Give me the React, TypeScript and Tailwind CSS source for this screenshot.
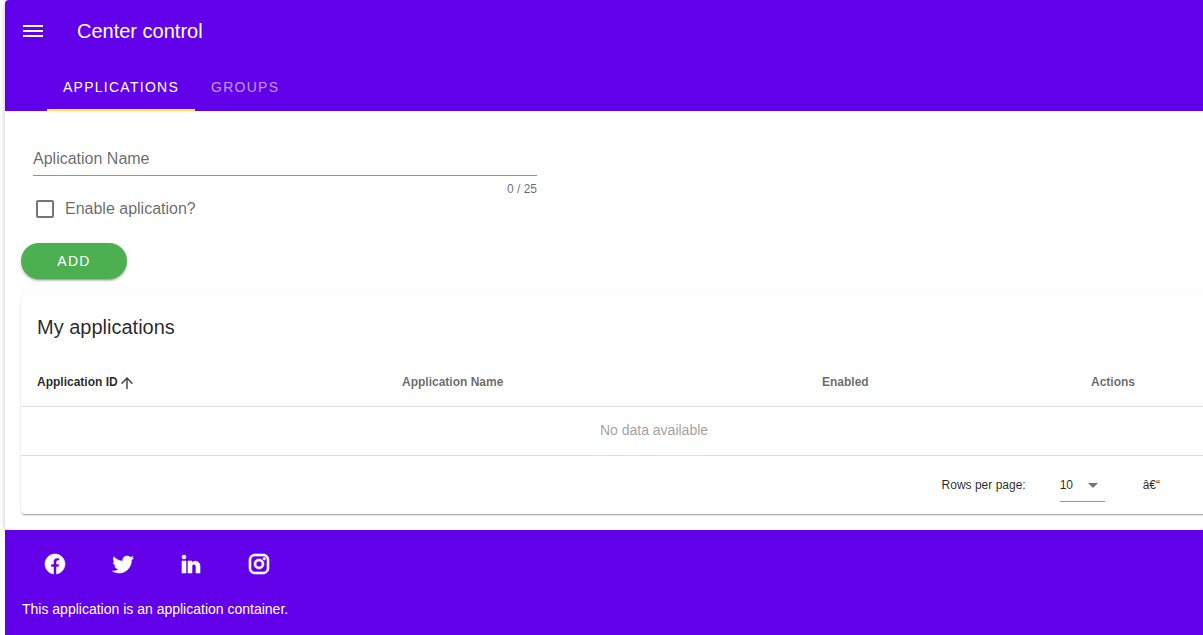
import { useState } from "react";

const icons = {
  menu: "M2,6H22V8H2V6M2,11H22V13H2V11M2,16H22V18H2V16Z",
  arrowUp: "M13,20H11V8L5.5,13.5L4.08,12.08L12,4.16L19.92,12.08L18.5,13.5L13,8V20Z",
  menuDown: "M7,10L12,15L17,10H7Z",
  facebook:
    "M12 2.04C6.5 2.04 2 6.53 2 12.06C2 17.06 5.66 21.21 10.44 21.96V14.96H7.9V12.06H10.44V9.85C10.44 7.34 11.93 5.96 14.22 5.96C15.31 5.96 16.45 6.15 16.45 6.15V8.62H15.19C13.95 8.62 13.56 9.39 13.56 10.18V12.06H16.34L15.89 14.96H13.56V21.96A10 10 0 0 0 22 12.06C22 6.53 17.5 2.04 12 2.04Z",
  twitter:
    "M22.46,6C21.69,6.35 20.86,6.58 20,6.69C20.88,6.16 21.56,5.32 21.88,4.31C21.05,4.81 20.13,5.16 19.16,5.36C18.37,4.5 17.26,4 16,4C13.65,4 11.73,5.92 11.73,8.29C11.73,8.63 11.77,8.96 11.84,9.27C8.28,9.09 5.11,7.38 3,4.79C2.63,5.42 2.42,6.16 2.42,6.94C2.42,8.43 3.17,9.75 4.33,10.5C3.62,10.5 2.96,10.3 2.38,10V10.03C2.38,12.11 3.86,13.85 5.82,14.24C5.46,14.34 5.08,14.39 4.69,14.39C4.42,14.39 4.15,14.36 3.89,14.31C4.43,16 6,17.26 7.89,17.29C6.43,18.45 4.58,19.13 2.56,19.13C2.22,19.13 1.88,19.11 1.54,19.07C3.44,20.29 5.7,21 8.12,21C16,21 20.33,14.46 20.33,8.79C20.33,8.6 20.33,8.42 20.32,8.23C21.16,7.63 21.88,6.87 22.46,6Z",
  linkedin:
    "M21,21H17V14.25C17,13.19 15.81,12.31 14.75,12.31C13.69,12.31 13,13.19 13,14.25V21H9V9H13V11C13.66,9.93 15.36,9.24 16.5,9.24C19,9.24 21,11.28 21,13.75V21M7,21H3V9H7V21M5,3A2,2 0 0,1 7,5A2,2 0 0,1 5,7A2,2 0 0,1 3,5A2,2 0 0,1 5,3Z",
  instagram:
    "M7.8,2H16.2C19.4,2 22,4.6 22,7.8V16.2A5.8,5.8 0 0,1 16.2,22H7.8C4.6,22 2,19.4 2,16.2V7.8A5.8,5.8 0 0,1 7.8,2M7.6,4A3.6,3.6 0 0,0 4,7.6V16.4C4,18.39 5.61,20 7.6,20H16.4A3.6,3.6 0 0,0 20,16.4V7.6C20,5.61 18.39,4 16.4,4H7.6M17.25,5.5A1.25,1.25 0 0,1 18.5,6.75A1.25,1.25 0 0,1 17.25,8A1.25,1.25 0 0,1 16,6.75A1.25,1.25 0 0,1 17.25,5.5M12,7A5,5 0 0,1 17,12A5,5 0 0,1 12,17A5,5 0 0,1 7,12A5,5 0 0,1 12,7M12,9A3,3 0 0,0 9,12A3,3 0 0,0 12,15A3,3 0 0,0 15,12A3,3 0 0,0 12,9Z",
};

function Icon({ name, className }: { name: keyof typeof icons; className: string }) {
  return (
    <svg viewBox="0 0 24 24" fill="currentColor" aria-hidden="true" className={className}>
      <path d={icons[name]} />
    </svg>
  );
}

const social: { name: "facebook" | "twitter" | "linkedin" | "instagram"; label: string }[] = [
  { name: "facebook", label: "Facebook" },
  { name: "twitter", label: "Twitter" },
  { name: "linkedin", label: "LinkedIn" },
  { name: "instagram", label: "Instagram" },
];

function Header() {
  return (
    <header className="rounded-tl bg-[#6200ea] text-white">
      <div className="flex h-[62px] items-center gap-8 pl-4">
        <button type="button" aria-label="Open menu">
          <Icon name="menu" className="size-6" />
        </button>
        <h1 className="text-xl">Center control</h1>
      </div>
      <nav className="flex h-[49px] pl-[42px] text-sm tracking-[0.09em]">
        <button type="button" className="border-b-2 border-[#ffeb3b] px-4 pt-[3px]">
          APPLICATIONS
        </button>
        <button type="button" className="border-b-2 border-transparent px-4 pt-[3px] text-white/60">
          GROUPS
        </button>
      </nav>
    </header>
  );
}

function ApplicationForm() {
  const [name, setName] = useState("");
  return (
    <form onSubmit={(event) => event.preventDefault()}>
      <div className="max-w-[516px] pl-3">
        <input
          aria-label="Aplication Name"
          placeholder="Aplication Name"
          maxLength={25}
          value={name}
          onChange={(event) => setName(event.target.value)}
          className="block h-9 w-full border-b border-[#949494] pt-[2px] text-base text-black/85 outline-none placeholder:text-black/60"
        />
        <div className="mt-[5px] text-right text-xs text-black/60">{name.length} / 25</div>
        <label className="flex h-6 w-fit items-center gap-[11px] pl-[3px] text-base text-black/60">
          <input
            type="checkbox"
            className="size-[18px] appearance-none rounded-xs border-2 border-[#757575] checked:bg-[#6200ea]"
          />
          Enable aplication?
        </label>
      </div>
      <button
        type="submit"
        className="mt-[22px] h-9 w-[106px] rounded-full bg-[#4caf50] text-sm tracking-[0.09em] text-white shadow-[0_3px_1px_-2px_rgba(0,0,0,.2),0_2px_2px_0_rgba(0,0,0,.14),0_1px_5px_0_rgba(0,0,0,.12)]"
      >
        ADD
      </button>
    </form>
  );
}

function ApplicationTable() {
  return (
    <section className="mt-4 -mr-[100px] rounded shadow-[0_2px_1px_-1px_rgba(0,0,0,.2),0_1px_1px_0_rgba(0,0,0,.14),0_1px_3px_0_rgba(0,0,0,.12)]">
      <h2 className="flex h-16 items-center px-4 text-xl text-black/85">My applications</h2>
      <table className="w-full table-fixed border-collapse text-left">
        <thead>
          <tr className="h-[47px] border-b border-[#e0e0e0] text-xs text-black/60">
            <th className="w-[365px] px-4 text-black/85">
              <span className="flex items-center">
                Application ID
                <Icon name="arrowUp" className="mt-[2px] size-[18px] text-black/70" />
              </span>
            </th>
            <th className="w-[420px] px-4">Application Name</th>
            <th className="w-[269px] px-4">Enabled</th>
            <th className="px-4">Actions</th>
          </tr>
        </thead>
        <tbody>
          <tr className="h-[49px] border-b border-[#e0e0e0]">
            <td colSpan={4} className="pb-[2px] text-center text-sm text-black/40">
              No data available
            </td>
          </tr>
        </tbody>
      </table>
      <div className="flex h-[58px] items-center justify-end pr-[127px] text-xs text-black/85">
        <label htmlFor="rows" className="mr-[34px]">
          Rows per page:
        </label>
        <div className="mr-[38px] grid h-[34px] w-[45px] items-center border-b border-[#949494] pt-px">
          <select id="rows" defaultValue="10" className="col-start-1 row-start-1 w-full appearance-none outline-none">
            <option>5</option>
            <option>10</option>
            <option>15</option>
          </select>
          <Icon
            name="menuDown"
            className="pointer-events-none col-start-1 row-start-1 size-6 justify-self-end text-black/55"
          />
        </div>
        <span>â€“</span>
      </div>
    </section>
  );
}

export default function App() {
  return (
    <div className="min-h-screen overflow-hidden bg-white pl-[5px] font-['Liberation_Sans',Arial,sans-serif]">
      <div className="rounded shadow-[0_1px_5px_0_rgba(0,0,0,.25)]">
        <Header />
        <main className="px-4 pt-[29px] pb-4">
          <ApplicationForm />
          <ApplicationTable />
        </main>
      </div>
      <footer className="bg-[#6200ea] pt-4 pb-4 text-sm text-white">
        <div className="flex gap-8 pl-8">
          {social.map((item) => (
            <a key={item.name} href="#" aria-label={item.label} className="flex size-9 items-center justify-center">
              <Icon name={item.name} className="size-6 stroke-current stroke-[0.6]" />
            </a>
          ))}
        </div>
        <p className="mt-[17px] pl-[17px] leading-5">This application is an application container.</p>
      </footer>
    </div>
  );
}
